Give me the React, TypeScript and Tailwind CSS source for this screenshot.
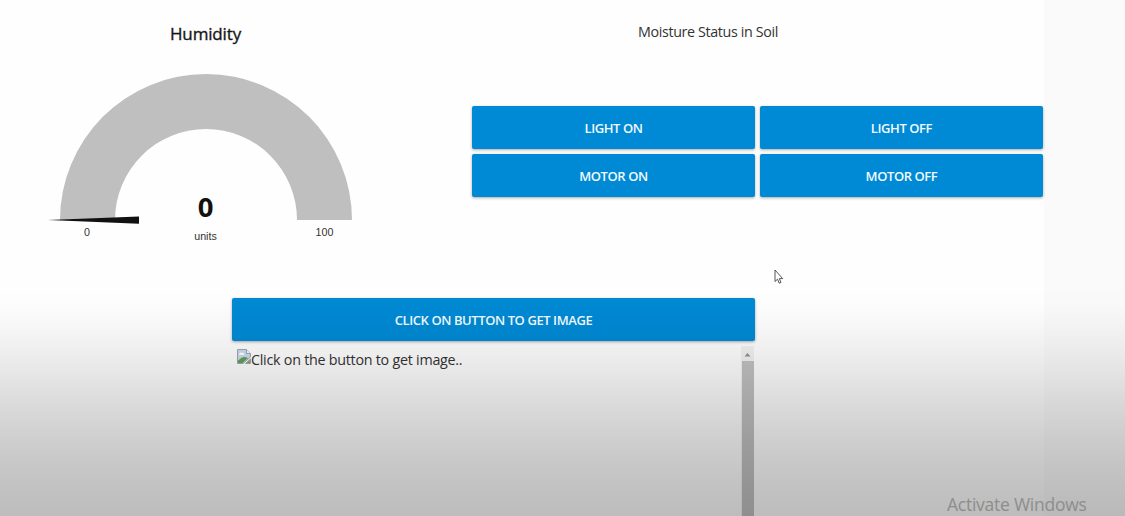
import type { ReactNode } from 'react';

function ActionButton({ children }: { children: ReactNode }) {
  return (
    <button className="flex h-[43px] w-full items-center justify-center rounded-[2px] bg-[#0089d4] pt-[2px] text-[13px] font-semibold tracking-[-0.42px] text-[#f2fbff] shadow-[0_1px_3px_rgba(40,25,25,0.38)]">
      {children}
    </button>
  );
}

function HumidityGauge() {
  return (
    <section className="flex w-[411px] flex-col items-center">
      <h2 className="mt-[22px] h-6 text-[17px] leading-6 font-medium tracking-[-0.15px] text-[#161616] [-webkit-text-stroke:0.35px_#161616]">Humidity</h2>
      <svg className="mt-[20px] ml-px" width="320" height="184" viewBox="46 66 320 184">
        <path d="M60 220A146 146 0 0 1 352 220H297A91 91 0 0 0 115 220Z" fill="#bfbfbf" />
        <path d="M48 220L139 216.5V223.8Z" fill="#111" />
        <text x="205.5" y="217" textAnchor="middle" className="font-bold" fontSize="27.5" fill="#111">0</text>
        <g fontFamily="Liberation Sans, sans-serif" fontSize="10.7" fill="#333" textAnchor="middle">
          <text x="87" y="236">0</text>
          <text x="205.5" y="239.5">units</text>
          <text x="324.5" y="236">100</text>
        </g>
      </svg>
    </section>
  );
}

function BrokenImageIcon() {
  return (
    <svg width="14" height="15" viewBox="0 0 14 15" className="shrink-0">
      <path d="M.5 .5H9.5L13.5 4.5V8L6 14.5H.5Z" fill="#c9d9f2" stroke="#a3a5a9" />
      <path d="M9.5 .5V4.5H13.5" fill="#fff" stroke="#a3a5a9" />
      <path d="M2 6C2 4 4 3 5 4C7 3 8 5 7 6Z" fill="#fff" />
      <path d="M1 14V11.5L5 8.5L8 8L11 9L5.5 14Z" fill="#5f9f57" />
      <path d="M8.5 14.5L13.5 10V14.5Z" fill="#7aa874" stroke="#a3a5a9" />
    </svg>
  );
}

export default function App() {
  return (
    <main className="relative flex h-[516px] w-[1125px] overflow-hidden bg-[#fafafb] font-['Open_Sans','Noto_Sans',sans-serif]">
      <div className="flex w-[1044px] flex-col bg-[#fefefe]">
        <div className="flex h-[298px]">
          <HumidityGauge />
          <section className="ml-[61px] w-[572px]">
            <p className="mt-[20px] h-6 w-[472px] text-center text-[14.3px] leading-6 tracking-[-0.36px] text-[#333]">
              Moisture Status in Soil
            </p>
            <div className="mt-[62px] grid grid-cols-[283px_283px] gap-x-[5px] gap-y-[5px]">
              <ActionButton>LIGHT ON</ActionButton>
              <ActionButton>LIGHT OFF</ActionButton>
              <ActionButton>MOTOR ON</ActionButton>
              <ActionButton>MOTOR OFF</ActionButton>
            </div>
          </section>
        </div>
        <section className="ml-[232px] flex w-[523px] grow flex-col">
          <ActionButton>CLICK ON BUTTON TO GET IMAGE</ActionButton>
          <div className="mt-[5px] flex grow">
            <div className="flex grow items-start pt-[3px] pl-[5px]">
              <BrokenImageIcon />
              <span className="text-[14.3px] leading-[22px] tracking-[-0.25px] whitespace-nowrap text-[#333]">Click on the button to get image..</span>
            </div>
            <div className="mr-px flex w-[13px] flex-col bg-[#f1f1f1]">
              <svg width="13" height="15" viewBox="0 0 13 15">
                <path d="M3.5 10.5L6.5 7L9.5 10.5Z" fill="#929292" />
              </svg>
              <div className="w-[12px] grow self-end bg-[#c1c1c1]" />
            </div>
          </div>
        </section>
      </div>
      <span className="absolute top-[492px] left-[947px] text-[17.5px] leading-6 tracking-[-0.25px] whitespace-nowrap text-[#bcbcbc]">Activate Windows</span>
      <svg className="absolute top-[269px] left-[774px]" width="10" height="16" viewBox="0 0 10 16">
        <path d="M1 1V12.5L3.5 10.2L5.2 14.2L7 13.4L5.3 9.6H8.7Z" fill="#fff" stroke="#444" strokeWidth="0.9" />
      </svg>
      <div className="pointer-events-none absolute inset-x-0 bottom-0 h-[236px] bg-[linear-gradient(to_bottom,transparent_0%,rgba(0,0,0,0.004)_9%,rgba(0,0,0,0.022)_17%,rgba(0,0,0,0.052)_27%,rgba(0,0,0,0.095)_40%,rgba(0,0,0,0.14)_53%,rgba(0,0,0,0.187)_68%,rgba(0,0,0,0.23)_85%,rgba(0,0,0,0.26)_100%)]" />
    </main>
  );
}
